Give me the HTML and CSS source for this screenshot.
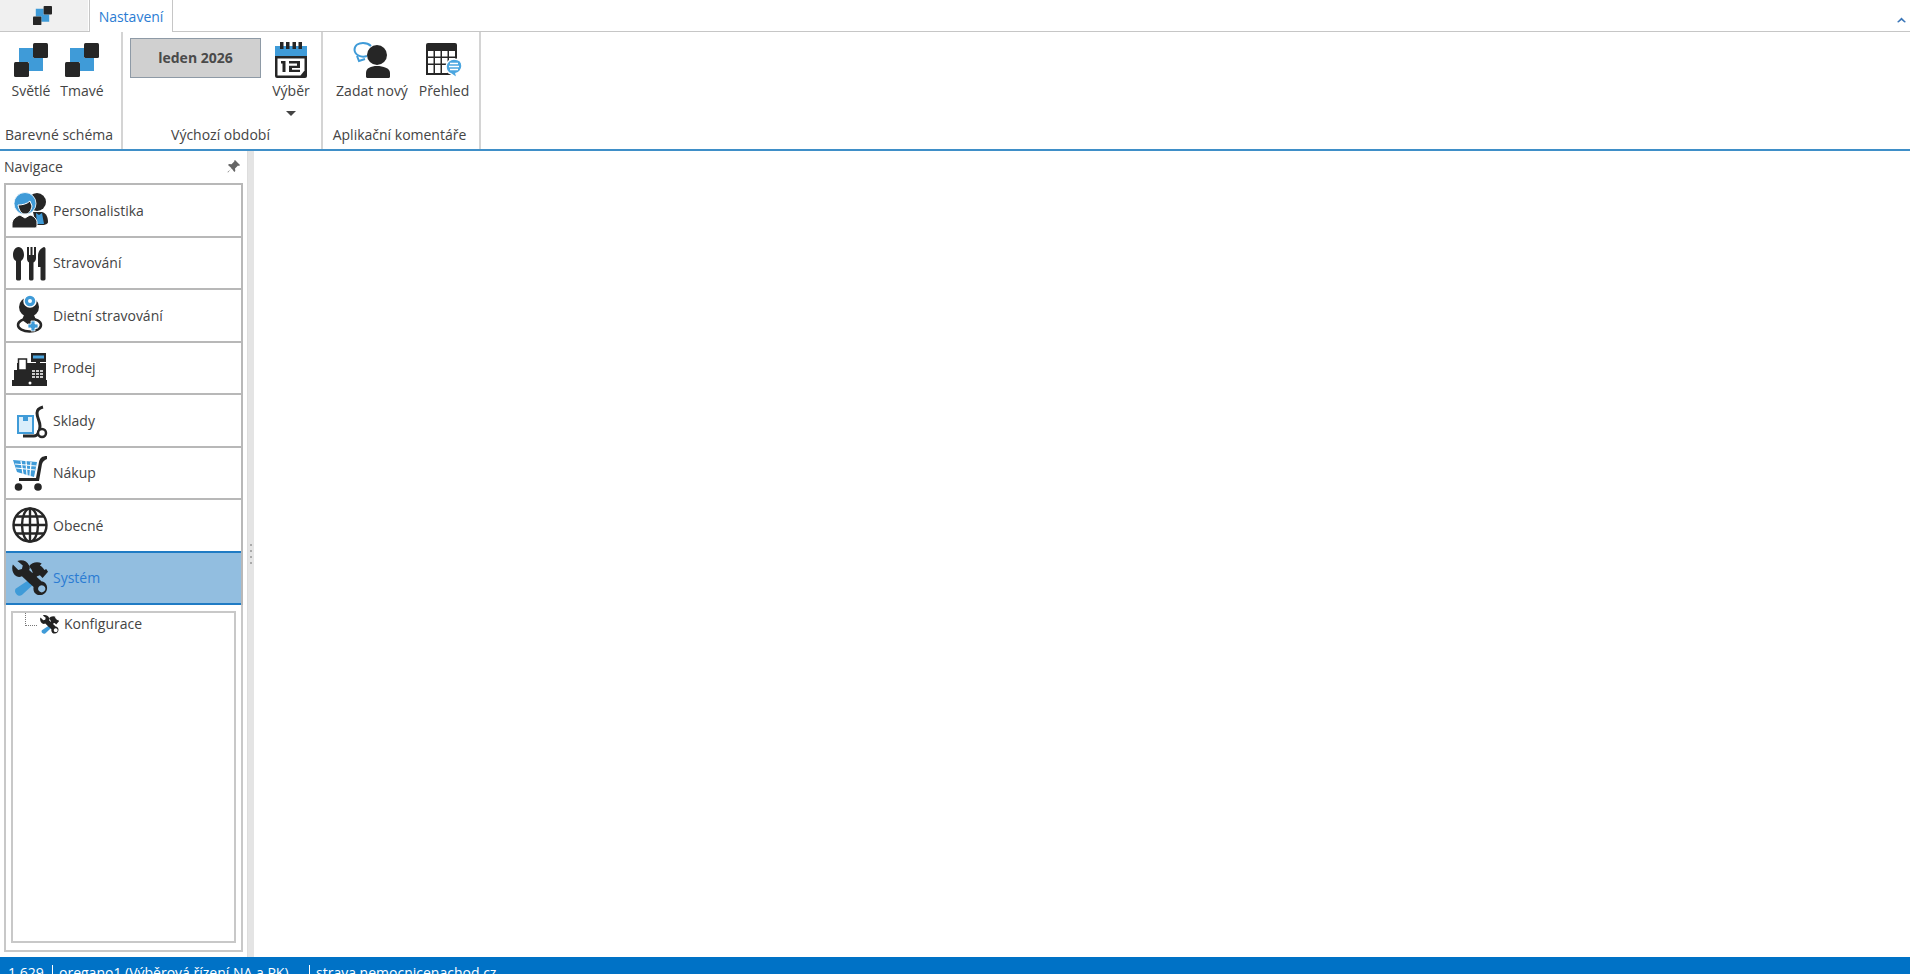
FILE: index.html

```html
<!DOCTYPE html>
<html lang="cs">
<head>
    <meta charset="UTF-8">
    <meta name="viewport" content="width=device-width, initial-scale=1.0">
    <title>Nastavení</title>
    <link rel="stylesheet" href="styles.css">
</head>
<body>
    <svg class="defs" width="0" height="0">
        <symbol id="scheme" viewBox="0 0 34 34">
            <path d="M5 5h14v10h10v13H15V19H5z" fill="#3f9bd8"/>
            <rect x="19" y="0" width="15" height="15" rx="1.500" fill="#262626"/>
            <rect x="0" y="19" width="15" height="15" rx="1.500" fill="#262626"/>
        </symbol>
        <symbol id="tools" viewBox="0 0 40 40">
            <path d="M19 22l5 5-13 12c-2 1-4 1-6-1-2-2-2-4-1-6z" fill="#3f9bd8"/>
            <path d="M19 7c3-4 9-6 14-3l-2 2c2 1 4 3 5 5l2-1 2 3-6 7-3-3-3 1-8 8-4-4 7-8-1-3z" fill="#222"/>
            <path fill-rule="evenodd" d="M1 5l6 6 4-1 1-4-6-5c5-2 11 0 13 5 1 2 1 4 0 5l14 13c3 0 6 3 6 7 0 5-4 8-8 8-5 0-8-4-7-9L11 18c-2 1-4 1-6 0-4-2-6-8-4-13zm32 23a4 4 0 1 0 .1 0z" fill="#222"/>
        </symbol>
    </svg>

    <header class="ribbon">
        <div class="tabs">
            <div class="app-tab"><svg class="app-icon"><use href="#scheme"/></svg></div>
            <div class="tab">Nastavení</div>
            <div class="collapse"><svg width="9" height="6" viewBox="0 0 9 6"><path d="M0 5l4.500-4.500L9 5 7.500 5.600 4.500 3 1.500 5.600z" fill="#3a76b8"/></svg></div>
        </div>
        <div class="groups">
            <section class="group group-scheme">
                <div class="group-body">
                    <div class="tool tool-light"><svg class="tool-icon"><use href="#scheme"/></svg><span>Světlé</span></div>
                    <div class="tool tool-dark"><svg class="tool-icon"><use href="#scheme"/></svg><span>Tmavé</span></div>
                </div>
                <div class="group-title">Barevné schéma</div>
            </section>
            <section class="group group-period">
                <div class="group-body">
                    <div class="period">leden 2026</div>
                    <div class="tool tool-pick">
                        <svg class="tool-icon" viewBox="0 0 34 36">
                            <path d="M1 4h32v10H1z" fill="#3f9bd8"/>
                            <path d="M6 0h3.500v7H6zM12 0h3.500v7H12zM18.500 0H22v7h-3.500zM24.500 0H28v7h-3.500z" fill="#262626"/>
                            <path d="M1 14h32v20a2 2 0 0 1-2 2H3a2 2 0 0 1-2-2z" fill="#262626"/>
                            <path d="M3.500 16.500h27v12l-4 5h-23z" fill="#fff"/>
                            <path d="M7 19h4.500v11H8.500v-8.500H7zM15 19h11v7h-8v1.800h8V30H15v-6.200h8v-2.400h-8z" fill="#262626"/>
                        </svg>
                        <span>Výběr</span>
                        <i class="caret"></i>
                    </div>
                </div>
                <div class="group-title">Výchozí období</div>
            </section>
            <section class="group group-comments">
                <div class="group-body">
                    <div class="tool tool-new">
                        <svg class="tool-icon wide" viewBox="0 0 38 36">
                            <path d="M14 14C8 16 2 13 1.500 8 1.500 3 6 1 10 1c3 0 6 1 8 3" fill="none" stroke="#3f9bd8" stroke-width="2"/>
                            <path d="M4 14l2 5 6-2" fill="none" stroke="#3f9bd8" stroke-width="2"/>
                            <circle cx="24" cy="13" r="10" fill="#262626"/>
                            <path d="M13 35v-4c0-5 5-7 11-7s13 2 13 7v4c0 .5-1 1-2 1H15c-1 0-2-.5-2-1z" fill="#262626"/>
                        </svg>
                        <span>Zadat nový</span>
                    </div>
                    <div class="tool tool-list">
                        <svg class="tool-icon wide" viewBox="0 0 38 36">
                            <path d="M3 1h27a2 2 0 0 1 2 2v30H1V3a2 2 0 0 1 2-2z" fill="#262626"/>
                            <path d="M3 9h5.500v5.500H3zM10 9h5.500v5.500H10zM17 9h5.500v5.500H17zM24 9h6v5.500h-6zM3 16h5.500v5.500H3zM10 16h5.500v5.500H10zM17 16h5.500v5.500H17zM24 16h6v5.500h-6zM3 23h5.500v8H3zM10 23h5.500v8H10zM17 23h5.500v8H17z" fill="#fff"/>
                            <path d="M29 17c5 0 8 3 8 7s-3 7-6 7.500l1 4.500-6-4c-3-1-5-4-5-7.500 0-4 4-7.500 8-7.500z" fill="#4ba6e0" stroke="#fff" stroke-width="1.500"/>
                            <path d="M25 21.500h8M24 24.500h10M25 27.500h8" stroke="#fff" stroke-width="1.300"/>
                        </svg>
                        <span>Přehled</span>
                    </div>
                </div>
                <div class="group-title">Aplikační komentáře</div>
            </section>
        </div>
    </header>

    <main class="workspace">
        <aside class="nav">
            <div class="nav-head">
                <span>Navigace</span>
                <svg width="13" height="13" viewBox="0 0 13 13"><path d="M8 0l5 5-1 1-1-.5-3 3 .3 2.500-1 1L4.500 8.200 1 12.500.5 12 4.800 8.500 1 5l1-1 2.500.3 3-3L7 1z" fill="#666"/></svg>
            </div>
            <div class="nav-items">
                <div class="nav-item">
                    <svg class="nav-icon" viewBox="0 0 36 36">
                        <circle cx="25" cy="10" r="9" fill="#262626"/>
                        <path d="M21 20h9c4 1 6 5 6 10 0 2-3 3-5 3H24z" fill="#262626"/>
                        <path d="M24 21l3 2 3-2 2 11h-7z" fill="#3f9bd8"/>
                        <circle cx="13" cy="11.500" r="11" fill="#3f9bd8" stroke="#fff" stroke-width=".8"/>
                        <path d="M6 13c4 0 9-1 12-4l2 5c-1 5-3 8-7 8s-6-4-7-9z" fill="#262626" stroke="#fff" stroke-width="1"/>
                        <path d="M0 36v-4c0-5 5-8 8-9l5 3 5-3c4 1 7 4 7 8v3c0 2-2 2-3 2z" fill="#262626" stroke="#fff" stroke-width="1"/>
                    </svg>
                    <span>Personalistika</span>
                </div>
                <div class="nav-item">
                    <svg class="nav-icon" viewBox="0 0 36 36">
                        <path d="M6.500 2C10 2 12 6 12 10c0 3-1.500 5-3 6v18c0 2-5 2-5 0V16C2 15 1 13 1 10c0-4 2-8 5.500-8z" fill="#262626"/>
                        <path d="M15 2h2v8h1.500V2h2v8H22V2h2v11c0 2-1 4-2.500 4.500V34c0 2-4.500 2-4.500 0V17.500C15.500 17 15 15 15 13z" fill="#262626"/>
                        <path d="M32 2c1 0 1.500 1 1.500 2v30c0 2-5 2-5 0V22H26V11c0-5 3-8 6-9z" fill="#262626"/>
                    </svg>
                    <span>Stravování</span>
                </div>
                <div class="nav-item">
                    <svg class="nav-icon" viewBox="0 0 36 36">
                        <circle cx="17" cy="10" r="10" fill="#262626"/>
                        <path d="M12 18h10l2 5-7 5-7-5z" fill="#262626"/>
                        <ellipse cx="17.500" cy="28" rx="11.500" ry="6.500" fill="none" stroke="#262626" stroke-width="2.500"/>
                        <circle cx="18" cy="4" r="6" fill="#3f9bd8" stroke="#fff" stroke-width="1.500"/>
                        <circle cx="18" cy="4" r="2" fill="#fff"/>
                        <path d="M19 24h4v3h3v4h-3v3h-4v-3h-3v-4h3z" fill="#3f9bd8" stroke="#fff" stroke-width=".8"/>
                    </svg>
                    <span>Dietní stravování</span>
                </div>
                <div class="nav-item">
                    <svg class="nav-icon" viewBox="0 0 36 36">
                        <path d="M19 3h15v9H19z" fill="#262626"/>
                        <path d="M21 5.500h11v3H21z" fill="#4ba6e0"/>
                        <path d="M5 20V13h2v7h8V13h9v-2h4v2h6v17H2V20z" fill="#262626"/>
                        <path d="M6.500 9h8v11h-8z" fill="#fff" stroke="#262626" stroke-width="1.500"/>
                        <path d="M20 20h3v2h-3zM24 20h3v2h-3zM28 20h3v2h-3zM20 23h3v2h-3zM24 23h3v2h-3zM28 23h3v2h-3zM20 26h3v2h-3zM24 26h3v2h-3zM28 26h3v2h-3z" fill="#ccc"/>
                        <path d="M0 30h35v6H0z" fill="#262626"/>
                        <circle cx="18" cy="33" r="1.500" fill="#fff"/>
                    </svg>
                    <span>Prodej</span>
                </div>
                <div class="nav-item">
                    <svg class="nav-icon" viewBox="0 0 36 36">
                        <rect x="6" y="14" width="15" height="17" fill="#d9eefb" stroke="#3f9bd8" stroke-width="2"/>
                        <rect x="11" y="14" width="5" height="5" fill="#3f9bd8"/>
                        <path d="M31 5c-4 1-6 3-6 6 0 5 3 8 3 13 0 5-2 10-6 10H11" fill="none" stroke="#262626" stroke-width="3"/>
                        <circle cx="30" cy="31" r="4" fill="#fff" stroke="#262626" stroke-width="2.500"/>
                    </svg>
                    <span>Sklady</span>
                </div>
                <div class="nav-item">
                    <svg class="nav-icon" viewBox="0 0 36 36">
                        <path d="M1 5l24 2-3 15-17-5z" fill="#3f9bd8"/>
                        <path d="M3 9l21 2M4 13l19 2M9 6l2 13M14 6l1 14M19 7l-1 14" stroke="#fff" stroke-width="1.200"/>
                        <path d="M35 1c-5 0-7 2-8 6l-3 16H7v3h20l3-17c1-3 3-4 5-5z" fill="#262626"/>
                        <circle cx="6.500" cy="32" r="3.800" fill="#262626"/>
                        <circle cx="26" cy="32" r="3.800" fill="#262626"/>
                    </svg>
                    <span>Nákup</span>
                </div>
                <div class="nav-item">
                    <svg class="nav-icon" viewBox="0 0 36 36">
                        <g fill="none" stroke="#262626" stroke-width="2.400">
                            <circle cx="18" cy="18" r="16.500"/>
                            <ellipse cx="18" cy="18" rx="8" ry="16.500"/>
                            <path d="M18 1v34M1.500 18h33M4 9.500h28M4 26.500h28"/>
                        </g>
                    </svg>
                    <span>Obecné</span>
                </div>
                <div class="nav-item active">
                    <svg class="nav-icon"><use href="#tools"/></svg>
                    <span>Systém</span>
                </div>
            </div>
            <div class="tree">
                <div class="tree-row">
                    <i class="tree-line"></i>
                    <svg class="tree-icon"><use href="#tools"/></svg>
                    <span>Konfigurace</span>
                </div>
            </div>
        </aside>
        <div class="splitter"><i></i><i></i><i></i><i></i></div>
        <div class="content"></div>
    </main>

    <footer class="status">
        <span class="status-cell status-count">1 629</span>
        <span class="status-cell status-user">oregano1 (Výběrová řízení NA a PK)</span>
        <span class="status-cell">strava.nemocnicenachod.cz</span>
    </footer>
</body>
</html>
```

FILE: styles.css

```css
* {
    box-sizing: border-box;
}
html, body {
    height: 100%;
    overflow: hidden;
}
body {
    margin: 0;
    display: flex;
    flex-direction: column;
    font-family: "Open Sans", "Noto Sans", sans-serif;
    font-size: 14px;
    color: #444;
    background-color: white;
}
.defs {
    position: absolute;
}

/* ribbon */
.ribbon {
    flex: none;
    height: 151px;
    border-bottom: 2px solid #3f8fc8;
}
.tabs {
    display: flex;
    height: 32px;
    border-bottom: 1px solid #c6c6c6;
}
.app-tab {
    width: 88px;
    height: 31px;
    padding-right: 3px;
    display: flex;
    align-items: center;
    justify-content: center;
    background-color: #f0f0f0;
}
.app-icon {
    width: 19px;
    height: 19px;
}
.tab {
    width: 84px;
    height: 32px;
    margin-left: 1px;
    display: flex;
    align-items: center;
    justify-content: center;
    color: #2b7cd3;
    background-color: white;
    border: 1px solid #c6c6c6;
    border-top: none;
    border-bottom: none;
}
.collapse {
    margin-left: auto;
    padding: 8px 4px 0 0;
}
.groups {
    display: flex;
    height: 117px;
}
.group {
    display: flex;
    flex-direction: column;
    border-right: 2px solid #d4d4d4;
}
.group-scheme { width: 123px; }
.group-period { width: 200px; }
.group-comments { width: 158px; }
.group-body {
    flex: 1;
    display: flex;
    min-height: 0;
}
.group-title {
    height: 28px;
    padding-right: 3px;
    text-align: center;
    line-height: 28px;
    white-space: nowrap;
}
.tool {
    display: flex;
    flex-direction: column;
    align-items: center;
    padding-top: 10px;
    white-space: nowrap;
}
.tool span {
    margin-top: 3px;
    line-height: 20px;
}
.tool-icon {
    width: 34px;
    height: 36px;
}
.tool-light { width: 62px; }
.tool-dark { width: 40px; }
.period {
    width: 131px;
    height: 40px;
    margin: 6px 0 0 7px;
    text-align: center;
    line-height: 38px;
    font-weight: 700;
    color: #4a4a4a;
    background-color: #d0d0d0;
    border: 1px solid #8e9aa6;
}
.tool-pick {
    width: 48px;
    margin-left: 6px;
}
.caret {
    width: 0;
    height: 0;
    margin-top: 10px;
    border-top: 5px solid #444;
    border-left: 5px solid transparent;
    border-right: 5px solid transparent;
}
.tool-new { width: 90px; margin-left: 4px; }
.tool-list { width: 54px; }
.wide {
    width: 38px;
}

/* navigation */
.workspace {
    flex: 1;
    display: flex;
    min-height: 0;
}
.nav {
    width: 248px;
    padding: 0 4px 5px 4px;
    display: flex;
    flex-direction: column;
    border-right: 1px solid #ddd;
}
.nav-head {
    height: 32px;
    padding: 0 3px 2px 0;
    display: flex;
    align-items: center;
    justify-content: space-between;
}
.nav-items {
    border: 2px solid #b8b8b8;
    border-bottom: none;
}
.nav-item {
    height: 52.5px;
    padding-left: 6px;
    display: flex;
    align-items: center;
    gap: 5px;
    background-color: white;
    border-bottom: 2px solid #b8b8b8;
}
.nav-item.active {
    color: #2b7cd3;
    background-color: #92bee0;
    border-top: 2px solid #1f7bc4;
    border-bottom: 2px solid #1f7bc4;
    margin-top: -2px;
    height: 54.5px;
}
.nav-icon {
    width: 36px;
    height: 36px;
    flex: none;
    overflow: visible;
}
.tree {
    flex: 1;
    padding: 6px 5px 7px;
    border: 2px solid #c8c8c8;
    border-top: none;
    display: flex;
}
.tree-row {
    flex: 1;
    padding: 0 0 0 12px;
    display: flex;
    align-items: flex-start;
    height: 100%;
    border: 2px solid #c8c8c8;
}
.tree-line {
    width: 12px;
    height: 13px;
    border-left: 1px dotted #777;
    border-bottom: 1px dotted #777;
}
.tree-icon {
    width: 19px;
    height: 19px;
    margin: 2px 5px 0 3px;
}
.tree-row span {
    line-height: 22px;
}
.splitter {
    width: 6px;
    display: flex;
    flex-direction: column;
    align-items: center;
    justify-content: center;
    gap: 4px;
    background-color: #e4e4e4;
}
.splitter i {
    width: 2px;
    height: 2px;
    background-color: #aaa;
}
.content {
    flex: 1;
}

/* status bar */
.status {
    flex: none;
    height: 17px;
    display: flex;
    color: white;
    background-color: #0072c6;
}
.status-cell {
    height: 22px;
    margin-top: 8px;
    padding: 0 5px 0 6px;
    line-height: 16px;
    border-right: 1px solid white;
    white-space: nowrap;
}
.status-count {
    width: 53px;
    padding-left: 8px;
}
.status-user {
    width: 257px;
}
.status-cell:last-child {
    border-right: none;
}
```
